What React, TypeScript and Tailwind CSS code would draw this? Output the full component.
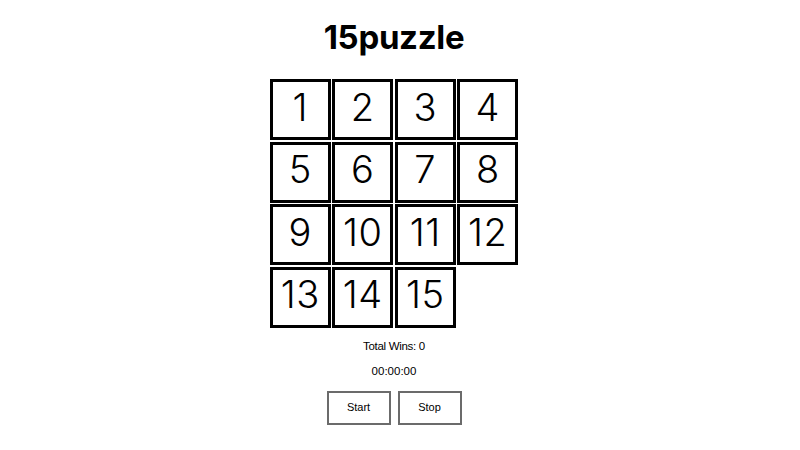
import React from 'react';

const tiles: (number | null)[] = [1, 2, 3, 4, 5, 6, 7, 8, 9, 10, 11, 12, 13, 14, 15, null];

const App: React.FC = () => {
    return (
        <div className="min-h-screen bg-white text-black pr-[12px]" style={{ fontFamily: 'Inter, "Noto Sans CJK JP", sans-serif' }}>
            <div className="flex flex-col items-center">
                {/* Title */}
                <h1 className="mt-[17px] h-[40px] leading-[40px] text-[33px] font-bold tracking-[-0.3px]">15puzzle</h1>

                {/* Board */}
                <div className="mt-[22px] grid grid-cols-[repeat(4,61px)] auto-rows-[61px] gap-[1.5px]">
                    {tiles.map((n, i) =>
                        n === null ? (
                            <div key={i}></div>
                        ) : (
                            <div
                                key={i}
                                className="border-[3px] border-black flex items-center justify-center text-[38px] font-light leading-none pb-[6px] tracking-[0.5px]"
                            >
                                {n}
                            </div>
                        )
                    )}
                </div>

                {/* Stats */}
                <div className="mt-[10px] h-[16px] leading-[16px] text-[11.5px] tracking-[-0.3px]" style={{ fontFamily: '"Liberation Sans", Arial, sans-serif' }}>Total Wins: 0</div>
                <div className="mt-[9px] h-[16px] leading-[16px] text-[11.5px]" style={{ fontFamily: '"Liberation Sans", Arial, sans-serif' }}>00:00:00</div>

                {/* Controls */}
                <div className="mt-[12px] flex gap-[7px]" style={{ fontFamily: '"Liberation Sans", Arial, sans-serif' }}>
                    <button className="w-[64px] h-[34px] border-2 border-[#6b6b6b] bg-white text-[11px]">Start</button>
                    <button className="w-[64px] h-[34px] border-2 border-[#6b6b6b] bg-white text-[11px]">Stop</button>
                </div>
            </div>
        </div>
    );
};

export default App;
